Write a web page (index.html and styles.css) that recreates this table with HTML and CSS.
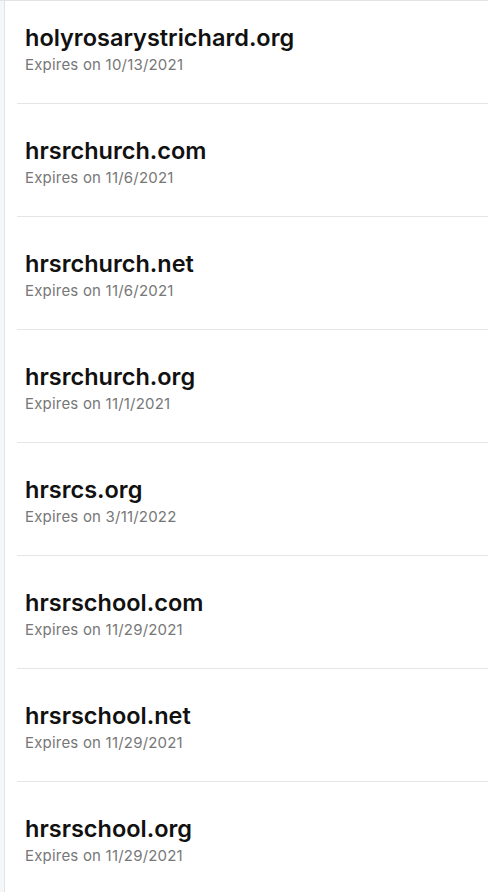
FILE: index.html
```html
<!DOCTYPE html>
<html lang="en">
<head>
    <meta charset="UTF-8">
    <link rel="stylesheet" href="styles.css">
</head>
<body>

<div class="page">
    <div class="rail"></div>
    <div class="domain-list">
        <div class="domain">
            <div class="domain-name">holyrosarystrichard.org</div>
            <div class="domain-exp">Expires on 10/13/2021</div>
        </div>
        <div class="domain">
            <div class="domain-name">hrsrchurch.com</div>
            <div class="domain-exp">Expires on 11/6/2021</div>
        </div>
        <div class="domain">
            <div class="domain-name">hrsrchurch.net</div>
            <div class="domain-exp">Expires on 11/6/2021</div>
        </div>
        <div class="domain">
            <div class="domain-name">hrsrchurch.org</div>
            <div class="domain-exp">Expires on 11/1/2021</div>
        </div>
        <div class="domain">
            <div class="domain-name">hrsrcs.org</div>
            <div class="domain-exp">Expires on 3/11/2022</div>
        </div>
        <div class="domain">
            <div class="domain-name">hrsrschool.com</div>
            <div class="domain-exp">Expires on 11/29/2021</div>
        </div>
        <div class="domain">
            <div class="domain-name">hrsrschool.net</div>
            <div class="domain-exp">Expires on 11/29/2021</div>
        </div>
        <div class="domain">
            <div class="domain-name">hrsrschool.org</div>
            <div class="domain-exp">Expires on 11/29/2021</div>
        </div>
    </div>
</div>

</body>
</html>
```

FILE: styles.css
```css
body {
    margin: 0;
    font-family: Inter, "Noto Sans", sans-serif;
    background: #fff;
    overflow: hidden;
}
.page {
    display: flex;
    border-top: 1px solid #e3e3e3;
    min-height: 891px;
}
.rail {
    width: 4px;
    flex-shrink: 0;
    background: #f4f6f8;
    border-right: 1px solid #dde4eb;
}
.domain-list {
    flex: 1;
    padding-left: 12px;
}
.domain {
    padding: 31px 8px 27px;
    border-bottom: 1px solid #e6e6e6;
}
.domain:first-child {
    padding-top: 21px;
}
.domain-name {
    font-size: 23.5px;
    font-weight: 600;
    color: #111;
    line-height: 32px;
}
.domain-exp {
    font-size: 15px;
    letter-spacing: 0.2px;
    color: #777;
    line-height: 22px;
}
```
